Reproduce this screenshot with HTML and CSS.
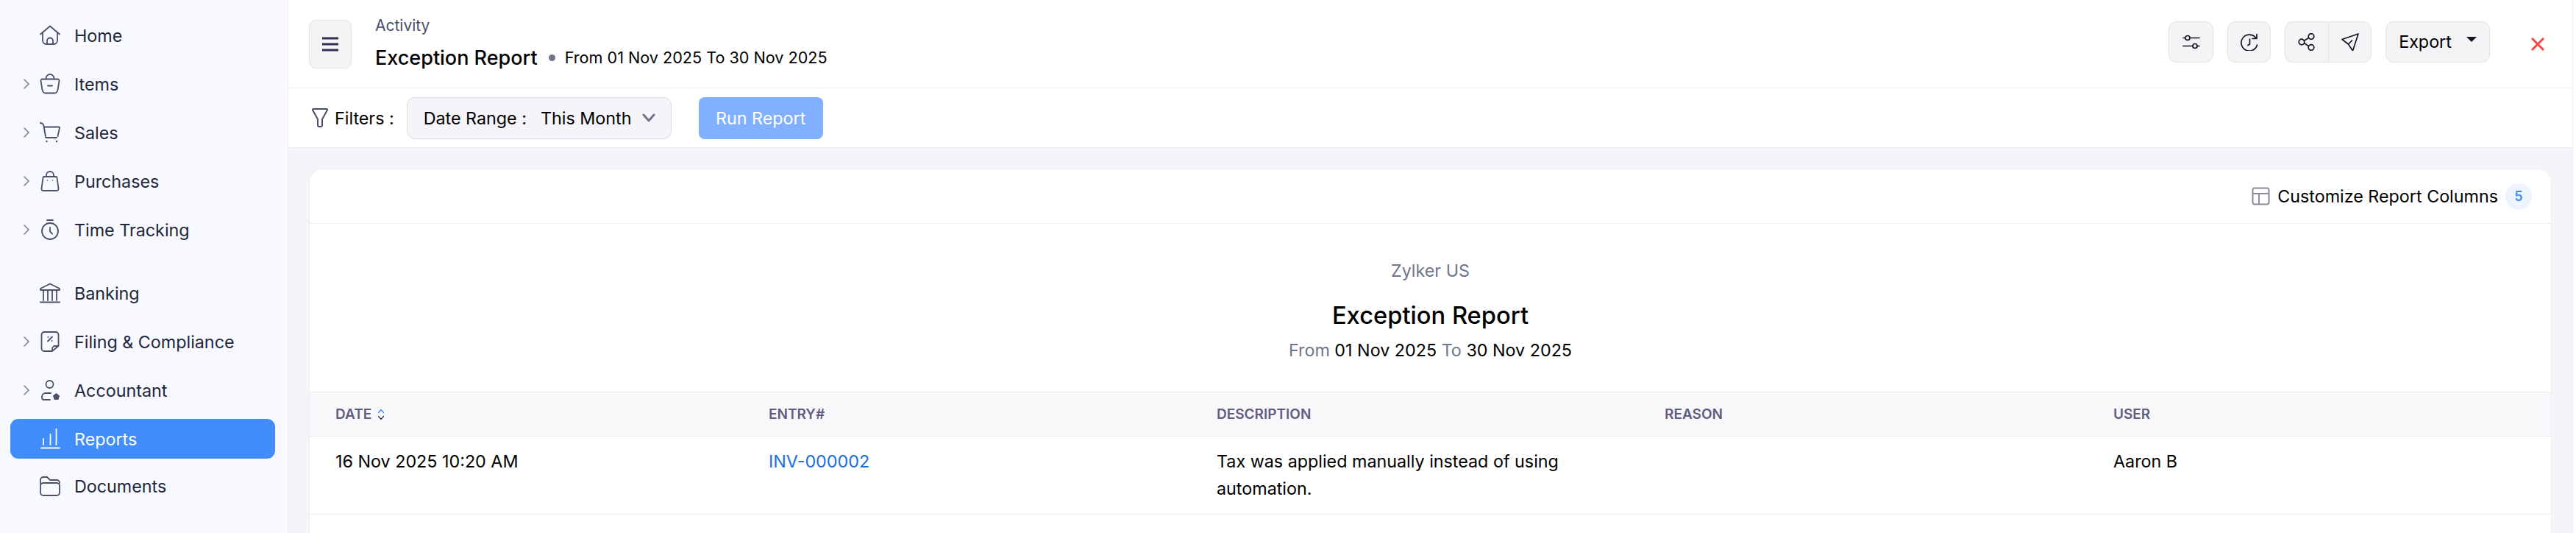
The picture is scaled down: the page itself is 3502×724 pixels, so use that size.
FILE: index.html
```html
<!DOCTYPE html>
<html lang="en">
  <head>
    <meta charset="UTF-8" />
    <title>Exception Report</title>
    <link rel="stylesheet" href="styles.css">
  </head>

  <body>
    <aside class="sidebar">
      <nav class="nav">
        <a class="nav-item">
          <span class="nav-arrow"></span>
          <svg class="nav-icon" viewBox="0 0 28 28"><path d="M1 12.500 14 1.500l13 11M4 10.500V21a5 5 0 0 0 5 5h10a5 5 0 0 0 5-5V10.500M10 26v-4.500a4 4 0 0 1 8 0V26"/></svg>
          Home
        </a>
        <a class="nav-item">
          <svg class="nav-arrow" viewBox="0 0 8 14"><path d="m1 1 6 6-6 6"/></svg>
          <svg class="nav-icon" viewBox="0 0 28 28"><path d="M8.500 7.500V6.500a5.500 5.500 0 0 1 11 0v1M3.500 7.500h21a2 2 0 0 1 2 2.400L24.500 22a5 5 0 0 1-5 4.500h-11a5 5 0 0 1-5-4.500L1.500 9.900a2 2 0 0 1 2-2.400ZM11 16.500h6"/></svg>
          Items
        </a>
        <a class="nav-item">
          <svg class="nav-arrow" viewBox="0 0 8 14"><path d="m1 1 6 6-6 6"/></svg>
          <svg class="nav-icon" viewBox="0 0 28 28"><path d="M0 1c3 0 5 1 5.500 4l2.500 15a1 1 0 0 0 1 1h14M6 6.500h20a1 1 0 0 1 1 1.200L24.500 19"/><circle class="dot" cx="9.500" cy="26" r="1.200"/><circle class="dot" cx="23" cy="26" r="1.200"/></svg>
          Sales
        </a>
        <a class="nav-item">
          <svg class="nav-arrow" viewBox="0 0 8 14"><path d="m1 1 6 6-6 6"/></svg>
          <svg class="nav-icon" viewBox="0 0 28 28"><path d="M9 8V6a5 5 0 0 1 10 0v2M6 8h16a1.500 1.500 0 0 1 1.500 1.500L25.500 24a2.500 2.500 0 0 1-2.500 3H5a2.500 2.500 0 0 1-2.500-3L4.500 9.500A1.500 1.500 0 0 1 6 8Z"/><circle class="dot" cx="10.500" cy="13" r=".8"/><circle class="dot" cx="17.500" cy="13" r=".8"/></svg>
          Purchases
        </a>
        <a class="nav-item">
          <svg class="nav-arrow" viewBox="0 0 8 14"><path d="m1 1 6 6-6 6"/></svg>
          <svg class="nav-icon" viewBox="0 0 28 28"><path d="M10 1h8M14 11v5.500l3 3"/><circle cx="14" cy="16" r="11"/></svg>
          Time Tracking
        </a>

        <a class="nav-item nav-item-gap">
          <span class="nav-arrow"></span>
          <svg class="nav-icon" viewBox="0 0 28 28"><path d="M14 1.500 27 8v2H1V8ZM5 10v14M11 10v14M17 10v14M23 10v14M1 26.500h26"/></svg>
          Banking
        </a>
        <a class="nav-item">
          <svg class="nav-arrow" viewBox="0 0 8 14"><path d="m1 1 6 6-6 6"/></svg>
          <svg class="nav-icon" viewBox="0 0 28 28"><path d="M17 27H6a3.500 3.500 0 0 1-3.500-3.500v-19A3.500 3.500 0 0 1 6 1h16a3.500 3.500 0 0 1 3.500 3.500V20Zm0 0v-3a4 4 0 0 1 4-4h4.500M11 13.500l6-6"/><circle class="dot" cx="11.500" cy="8" r="1"/><circle class="dot" cx="16.500" cy="13" r="1"/></svg>
          Filing &amp; Compliance
        </a>
        <a class="nav-item">
          <svg class="nav-arrow" viewBox="0 0 8 14"><path d="m1 1 6 6-6 6"/></svg>
          <svg class="nav-icon" viewBox="0 0 28 28"><circle cx="13.500" cy="6" r="5"/><path d="M15 18H8a5 5 0 0 0-5 5v1a3 3 0 0 0 3 3h8"/><path class="solid" d="m22.500 18 4.500 3.500-1.700 5.500h-5.600L18 21.500Z"/></svg>
          Accountant
        </a>
        <a class="nav-item active">
          <span class="nav-arrow"></span>
          <svg class="nav-icon" viewBox="0 0 28 28"><path d="M2 26.500h25M5 22v-8M14.500 22V8M22.500 22V1"/></svg>
          Reports
        </a>
        <a class="nav-item nav-item-last">
          <span class="nav-arrow"></span>
          <svg class="nav-icon" viewBox="0 0 28 28"><path d="M1 11V6a4 4 0 0 1 4-4h5l4 4h9a4 4 0 0 1 4 4M5 10h18a4 4 0 0 1 4 4v9a4 4 0 0 1-4 4H5a4 4 0 0 1-4-4v-9a4 4 0 0 1 4-4Z"/></svg>
          Documents
        </a>
      </nav>
    </aside>

    <main class="main">
      <header class="topbar">
        <button class="menu-btn">
          <svg viewBox="0 0 22 20" class="menu-icon"><path d="M0 2h22M0 10h22M0 18h22"/></svg>
        </button>
        <div class="titles">
          <div class="crumb">Activity</div>
          <div class="title-row">
            <span class="title">Exception Report</span>
            <span class="title-dot"></span>
            <span class="title-range">From 01 Nov 2025 To 30 Nov 2025</span>
          </div>
        </div>
        <div class="actions">
          <button class="tool-btn btn-options">
            <svg class="tool-icon" viewBox="0 0 24 24"><path d="M10 6.500h13M1 6.500h3M20 17.500h3M1 17.500h13"/><circle cx="7" cy="6.500" r="3"/><circle cx="17" cy="17.500" r="3"/></svg>
          </button>
          <button class="tool-btn btn-history">
            <svg class="tool-icon" viewBox="0 0 24 24"><path d="M21 7a11 11 0 1 0 1.500 9M22 1.500V7.500h-6M12.500 8v7l-2.500 1.500"/></svg>
          </button>
          <div class="tool-group">
            <button class="tool-btn">
              <svg class="tool-icon" viewBox="0 0 24 24"><circle cx="5" cy="12" r="3.800"/><circle cx="18" cy="4.500" r="3.800"/><circle cx="18" cy="19.500" r="3.800"/><path d="m8.500 10.200 6-3.600M8.500 13.800l6 3.600"/></svg>
            </button>
            <button class="tool-btn">
              <svg class="tool-icon" viewBox="0 0 24 24"><path d="M23 1 1 8.500l8.500 6.500 6 9Zm-13.500 14 5-5"/></svg>
            </button>
          </div>
          <button class="tool-btn btn-export">
            Export
            <span class="caret"></span>
          </button>
          <svg class="close-icon" viewBox="0 0 18 18"><path d="m1 1 16 16M17 1 1 17"/></svg>
        </div>
      </header>

      <section class="filterbar">
        <svg class="funnel" viewBox="0 0 22 26"><path d="M2 1h18a1 1 0 0 1 .9 1.500L14 15v8a2 2 0 0 1-2 2h-2a2 2 0 0 1-2-2v-8L1.100 2.500A1 1 0 0 1 2 1Z"/></svg>
        <span class="filter-label">Filters :</span>
        <button class="range-btn">
          <span class="range-key">Date Range :</span>
          <span>This Month</span>
          <svg class="range-arrow" viewBox="0 0 18 12"><path d="m2 2 7 8 7-8"/></svg>
        </button>
        <button class="run-btn">Run Report</button>
      </section>

      <section class="content">
        <div class="card">
          <div class="card-bar">
            <svg class="columns-icon" viewBox="0 0 25 25"><path d="M4 1.500h17A2.500 2.500 0 0 1 23.500 4v17a2.500 2.500 0 0 1-2.500 2.500H4A2.500 2.500 0 0 1 1.500 21V4A2.500 2.500 0 0 1 4 1.500ZM1.500 9h22M10 9v14.500"/></svg>
            <span>Customize Report Columns</span>
            <span class="count">5</span>
          </div>

          <div class="report-head">
            <div class="org">Zylker US</div>
            <h2 class="report-title">Exception Report</h2>
            <div class="report-range">
              <span class="muted">From</span> 01 Nov 2025 <span class="muted">To</span> 30 Nov 2025
            </div>
          </div>

          <div class="grid grid-head">
            <div class="cell">DATE
              <svg class="sort-icon" viewBox="0 0 10 16"><path class="up" d="m1.500 5.500 3.500-4 3.500 4"/><path d="m1.500 10.500 3.500 4 3.500-4"/></svg>
            </div>
            <div class="cell">ENTRY#</div>
            <div class="cell">DESCRIPTION</div>
            <div class="cell">REASON</div>
            <div class="cell">USER</div>
          </div>
          <div class="grid grid-row">
            <div class="cell">16 Nov 2025 10:20 AM</div>
            <div class="cell"><a class="link">INV-000002</a></div>
            <div class="cell desc">Tax was applied manually instead of using automation.</div>
            <div class="cell"></div>
            <div class="cell">Aaron B</div>
          </div>
        </div>
      </section>
    </main>
  </body>
</html>
```

FILE: styles.css
```css
* {
  box-sizing: border-box;
}

html,
body {
  height: 100%;
}

body {
  display: flex;
  margin: 0;
  overflow: hidden;
  font-family: Inter, "Liberation Sans", sans-serif;
  font-size: 23.3px;
  color: #000;
  background: #fff;
}

button {
  font: inherit;
  color: inherit;
  cursor: pointer;
}

svg {
  display: block;
  fill: none;
  stroke-linecap: round;
  stroke-linejoin: round;
}

/* sidebar */
.sidebar {
  flex: 0 0 392px;
  padding: 21px 17px 0 14px;
  background: #f8f8ff;
  border-right: 1px solid #f0f0f5;
}

.nav {
  display: flex;
  flex-direction: column;
  gap: 12px;
}

.nav-item {
  display: flex;
  align-items: center;
  height: 54px;
  border-radius: 11px;
  color: #21263c;
  white-space: nowrap;
}

.nav-item-gap {
  margin-top: 20px;
}

.nav-item-last {
  margin-top: -2px;
}

.nav-arrow {
  flex: none;
  width: 8px;
  height: 14px;
  margin-left: 18px;
  stroke: #7d8096;
  stroke-width: 1.600;
}

.nav-icon {
  flex: none;
  width: 28px;
  height: 28px;
  margin: 0 19px 0 14px;
  stroke: #4a4f6a;
  stroke-width: 1.800;
}

.nav-icon .dot {
  fill: #4a4f6a;
  stroke: none;
}

.nav-icon .solid {
  fill: #4a4f6a;
  stroke: none;
}

.active {
  background: #408dfb;
  color: #fff;
}

.active .nav-icon {
  stroke: #fff;
}

/* main */
.main {
  flex: 1;
  display: flex;
  flex-direction: column;
  min-width: 0;
  margin-right: 4px;
  border-right: 1px solid #eeeef2;
}

.topbar {
  display: flex;
  align-items: center;
  flex: none;
  height: 120px;
  padding: 0 38px 6px 28px;
  border-bottom: 1px solid #ebebef;
}

.menu-btn {
  display: flex;
  align-items: center;
  justify-content: center;
  width: 58px;
  height: 66px;
  margin-top: 6px;
  padding: 0;
  background: #f4f4f6;
  border: 1px solid #e3e3e8;
  border-radius: 9px;
}

.menu-icon {
  width: 22px;
  height: 20px;
  stroke: #2f3154;
  stroke-width: 3;
}

.titles {
  margin: 4px 0 0 32px;
}

.crumb {
  font-size: 21px;
  line-height: 24px;
  color: #4a4f6a;
}

.title-row {
  display: flex;
  align-items: center;
  margin-top: 15px;
}

.title {
  font-size: 27px;
  font-weight: 500;
}

.title-dot {
  width: 9px;
  height: 9px;
  margin: 0 13px 0 15px;
  border-radius: 50%;
  background: #70758e;
}

.title-range {
  font-size: 21.600px;
}

.actions {
  display: flex;
  align-items: center;
  gap: 19px;
  margin-left: auto;
}

.tool-btn {
  display: flex;
  align-items: center;
  justify-content: center;
  width: 59px;
  height: 56px;
  padding: 0;
  background: #f4f4f6;
  border: 1px solid #e3e3e8;
  border-radius: 11px;
}

.btn-options {
  width: 61px;
}

.tool-icon {
  width: 24px;
  height: 24px;
  stroke: #15151f;
  stroke-width: 1.700;
}

.tool-group {
  display: flex;
}

.tool-group .tool-btn:first-child {
  border-radius: 11px 0 0 11px;
  border-right: none;
}

.tool-group .tool-btn:last-child {
  border-radius: 0 11px 11px 0;
}

.btn-export {
  width: 142px;
  gap: 20px;
}

.caret {
  width: 0;
  height: 0;
  margin-top: -6px;
  border-left: 7px solid transparent;
  border-right: 7px solid transparent;
  border-top: 7px solid #15151f;
}

.close-icon {
  width: 18px;
  height: 18px;
  margin-left: 37px;
  margin-top: 6px;
  stroke: #fb4444;
  stroke-width: 3;
  stroke-linecap: butt;
}

/* filters */
.filterbar {
  display: flex;
  align-items: center;
  flex: none;
  height: 81px;
  padding: 0 0 0 32px;
  border-bottom: 1px solid #ebebef;
}

.funnel {
  width: 22px;
  height: 26px;
  stroke: #4a4f6a;
  stroke-width: 2;
}

.filter-label {
  margin: 0 17px 0 9px;
}

.range-btn {
  display: flex;
  align-items: center;
  width: 360px;
  height: 57px;
  padding: 0 0 0 22px;
  background: #f4f4f9;
  border: 1px solid #dcdce8;
  border-radius: 11px;
}

.range-key {
  margin-right: 19px;
}

.range-arrow {
  width: 18px;
  height: 12px;
  margin-left: 15px;
  stroke: #70758e;
  stroke-width: 3;
}

.run-btn {
  width: 169px;
  height: 57px;
  margin-left: 37px;
  padding: 0;
  color: #fff;
  background: #80b0ff;
  border: none;
  border-radius: 8px;
}

/* report */
.content {
  flex: 1;
  min-height: 0;
  padding: 28px 28px 0 28px;
  background: #f4f4f9;
}

.card {
  height: 100%;
  overflow: hidden;
  background: #fff;
  border: 1px solid #edeef3;
  border-bottom: none;
  border-radius: 18px 18px 0 0;
}

.card-bar {
  display: flex;
  align-items: center;
  justify-content: flex-end;
  height: 74px;
  padding: 0 26px 0 0;
  border-bottom: 1px solid #f0f0f4;
}

.columns-icon {
  width: 25px;
  height: 25px;
  margin-right: 10px;
  stroke: #8a8aa0;
  stroke-width: 2;
}

.count {
  display: flex;
  align-items: center;
  justify-content: center;
  width: 36px;
  height: 36px;
  margin-left: 10px;
  border-radius: 50%;
  color: #408dfb;
  background: #edf4ff;
  font-size: 18px;
  font-weight: 600;
}

.report-head {
  height: 228px;
  padding-top: 50px;
  text-align: center;
}

.org {
  line-height: 28px;
  color: #70758e;
}

.report-title {
  margin: 25px 0 0;
  font-size: 32.700px;
  line-height: 42px;
  font-weight: 500;
}

.report-range {
  margin-top: 12px;
  line-height: 30px;
}

.muted {
  color: #70758e;
}

.grid {
  display: grid;
  grid-template-columns: 589px 609px 609px 610px 1fr;
  padding-left: 35px;
  border-bottom: 1px solid #ebebf2;
}

.grid-head {
  align-items: center;
  height: 61px;
  background: #f8f8fb;
  border-top: 1px solid #ebebf2;
  color: #5f5c82;
  font-size: 19px;
  font-weight: 600;
}

.grid-head .cell {
  display: flex;
  align-items: center;
  gap: 8px;
}

.sort-icon {
  width: 10px;
  height: 16px;
  stroke: #34354f;
  stroke-width: 1.300;
}

.sort-icon .up {
  stroke: #408dfb;
}

.grid-row {
  height: 106px;
  padding-top: 15px;
  line-height: 37px;
}

.desc {
  width: 500px;
}

.link {
  color: #1a6ee0;
}
```
